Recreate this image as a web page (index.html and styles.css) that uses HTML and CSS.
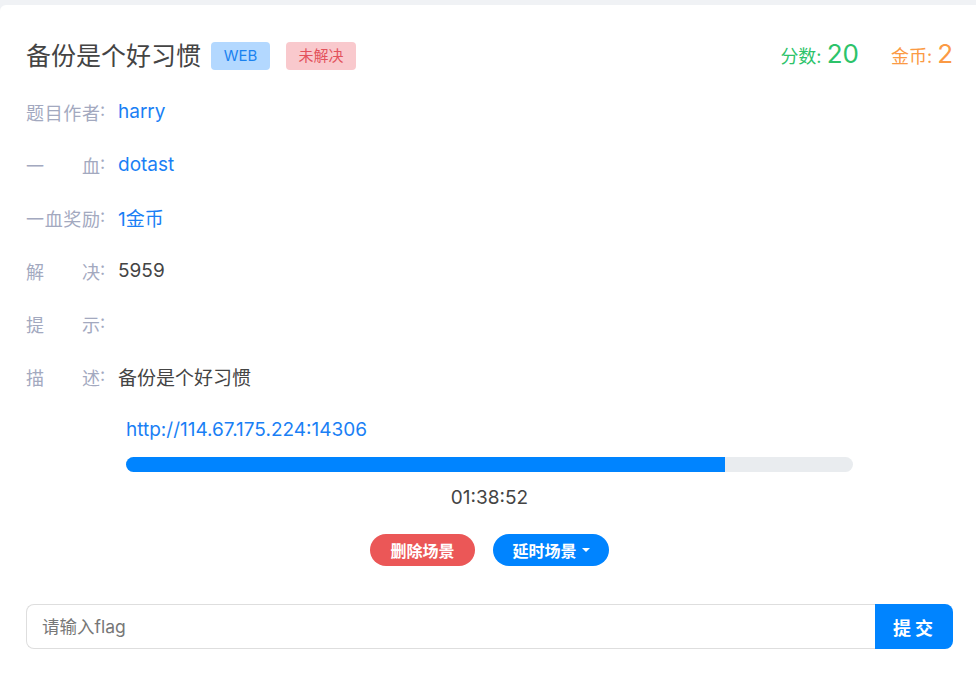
FILE: index.html
```html
<!DOCTYPE html>
<html>
<head>
    <title>备份是个好习惯</title>
    <link rel="stylesheet" href="styles.css">
</head>
<body>

    <div class="card">
        <!-- Header -->
        <div class="header">
            <div class="title-group">
                <h1 class="title">备份是个好习惯</h1>
                <span class="badge badge-web">WEB</span>
                <span class="badge badge-unsolved">未解决</span>
            </div>
            <div class="stats">
                <span class="stat stat-score">分数: <b>20</b></span>
                <span class="stat stat-coin">金币: <b>2</b></span>
            </div>
        </div>

        <!-- Info rows -->
        <div class="info">
            <div class="row"><span class="label"><span class="label-text">题目作者</span>:</span><a class="value link" href="#">harry</a></div>
            <div class="row"><span class="label"><span class="label-text">一血</span>:</span><a class="value link" href="#">dotast</a></div>
            <div class="row"><span class="label"><span class="label-text">一血奖励</span>:</span><span class="value link">1金币</span></div>
            <div class="row"><span class="label"><span class="label-text">解决</span>:</span><span class="value">5959</span></div>
            <div class="row"><span class="label"><span class="label-text">提示</span>:</span><span class="value"></span></div>
            <div class="row"><span class="label"><span class="label-text">描述</span>:</span><span class="value">备份是个好习惯</span></div>
        </div>

        <!-- Scene -->
        <div class="scene">
            <a class="scene-url" href="#">http://114.67.175.224:14306</a>
            <div class="progress"><div class="progress-bar" style="width: 82.4%"></div></div>
            <div class="timer">01:38:52</div>
            <div class="scene-buttons">
                <button class="btn btn-red">删除场景</button>
                <button class="btn btn-blue">延时场景<span class="caret"></span></button>
            </div>
        </div>

        <!-- Flag form -->
        <form class="flag-form">
            <input type="text" placeholder="请输入flag">
            <button type="submit">提交</button>
        </form>
    </div>

</body>
</html>
```

FILE: styles.css
```css
/* General Styling */
body {
    margin: 0;
    padding-top: 5px;
    height: 100vh;
    box-sizing: border-box;
    background-color: #f0f2f5;
    font-family: Inter, 'Noto Sans CJK SC', sans-serif;
    overflow: hidden;
}

.card {
    background: #fff;
    border-radius: 6px 0 0 0;
    padding: 37px 23px 0 26px;
    height: 100%;
    box-sizing: border-box;
}

.header {
    display: flex;
    justify-content: space-between;
    align-items: center;
    height: 28px;
}

.title-group {
    display: flex;
    align-items: center;
}

.title {
    margin: 0 10px 0 0;
    font-size: 25px;
    font-weight: normal;
    color: #444;
    line-height: 28px;
}

.badge {
    display: inline-block;
    box-sizing: border-box;
    height: 28px;
    line-height: 28px;
    border-radius: 4px;
    font-size: 15px;
    text-align: center;
}

.badge-web {
    background-color: #b3d8ff;
    color: #1a82f0;
    width: 59px;
}

.badge-unsolved {
    background-color: #f9c9cd;
    color: #e3525c;
    width: 70px;
    margin-left: 16px;
}

.stats {
    display: flex;
    align-items: baseline;
    gap: 32px;
    padding-bottom: 5px;
}

.stat {
    font-size: 18px;
}

.stat b {
    font-weight: normal;
    font-size: 26px;
}

.stat-score { color: #2dc36a; }
.stat-coin { color: #fb9a44; }

/* Info rows */
.info {
    margin-top: 15px;
}

.row {
    display: flex;
    align-items: center;
    height: 53px;
    font-size: 18px;
}

.label {
    display: flex;
    width: 82px;
    margin-right: 10px;
    color: #a3a9bf;
}

.label-text {
    width: 74px;
    text-align: justify;
    text-align-last: justify;
}

.value {
    font-size: 19px;
    color: #444;
}

.link {
    color: #1a7ff5;
    text-decoration: none;
}

/* Scene */
.scene {
    padding: 13px 100px 0 100px;
}

.scene-url {
    display: block;
    font-size: 19px;
    line-height: 27px;
    color: #1a7ff5;
    text-decoration: none;
}

.progress {
    margin-top: 14px;
    height: 15px;
    border-radius: 8px;
    background-color: #e9ecef;
    overflow: hidden;
}

.progress-bar {
    height: 100%;
    background-color: #0084ff;
}

.timer {
    margin-top: 12px;
    text-align: center;
    font-size: 19px;
    line-height: 27px;
    color: #444;
}

.scene-buttons {
    display: flex;
    justify-content: center;
    gap: 18px;
    margin-top: 23px;
}

.btn {
    height: 32px;
    border: none;
    border-radius: 16px;
    padding: 0;
    color: #fff;
    font-family: 'Noto Sans CJK SC', sans-serif;
    font-size: 16px;
    font-weight: bold;
    white-space: nowrap;
    cursor: pointer;
    display: flex;
    align-items: center;
    justify-content: center;
}

.btn-red { background-color: #eb5757; width: 105px; }
.btn-blue { background-color: #0084ff; width: 116px; }

.caret {
    display: inline-block;
    margin-left: 5px;
    border-top: 4px solid #fff;
    border-left: 4px solid transparent;
    border-right: 4px solid transparent;
}

/* Flag form */
.flag-form {
    display: flex;
    margin-top: 38px;
    height: 45px;
}

.flag-form input[type="text"] {
    flex: 1;
    box-sizing: border-box;
    height: 45px;
    padding: 0 15px;
    border: 1px solid #dedede;
    border-right: none;
    border-radius: 8px 0 0 8px;
    font-family: Inter, 'Noto Sans CJK SC', sans-serif;
    font-size: 17.5px;
    color: #444;
    outline: none;
}

.flag-form input::placeholder {
    color: #777;
}

.flag-form button {
    width: 78px;
    height: 45px;
    border: none;
    border-radius: 0 8px 8px 0;
    background-color: #0084ff;
    color: #fff;
    font-family: 'Noto Sans CJK SC', sans-serif;
    font-size: 18px;
    font-weight: bold;
    letter-spacing: 4px;
    padding-left: 8px;
    cursor: pointer;
}
```
